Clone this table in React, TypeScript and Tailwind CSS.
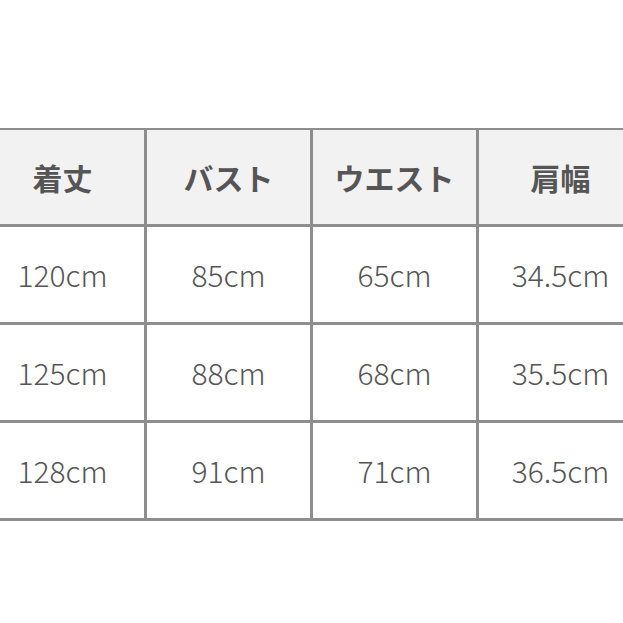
const headers = ['着丈', 'バスト', 'ウエスト', '肩幅']

const rows = [
  ['120cm', '85cm', '65cm', '34.5cm'],
  ['125cm', '88cm', '68cm', '35.5cm'],
  ['128cm', '91cm', '71cm', '36.5cm'],
]

export default function App() {
  return (
    <div
      className="w-[623px] h-[623px] bg-white overflow-hidden pt-[128px]"
      style={{ fontFamily: '"Noto Sans CJK JP", "Noto Sans", sans-serif' }}
    >
      <div className="ml-[-22px] w-[670px] grid grid-cols-[163px_163px_163px_163px] gap-[3px] bg-[#8e8e8e] border-t-2 border-b-[3px] border-x-[3px] border-[#8e8e8e]">
        {headers.map((h) => (
          <div key={h} className="h-[94px] bg-[#f2f2f2] flex items-center justify-center text-[30px] font-bold text-[#555]">
            {h}
          </div>
        ))}
        {rows.flat().map((v, i) => (
          <div key={i} className="h-[95px] bg-white flex items-center justify-center text-[30px] font-light text-[#555]">
            {v}
          </div>
        ))}
      </div>
    </div>
  )
}
